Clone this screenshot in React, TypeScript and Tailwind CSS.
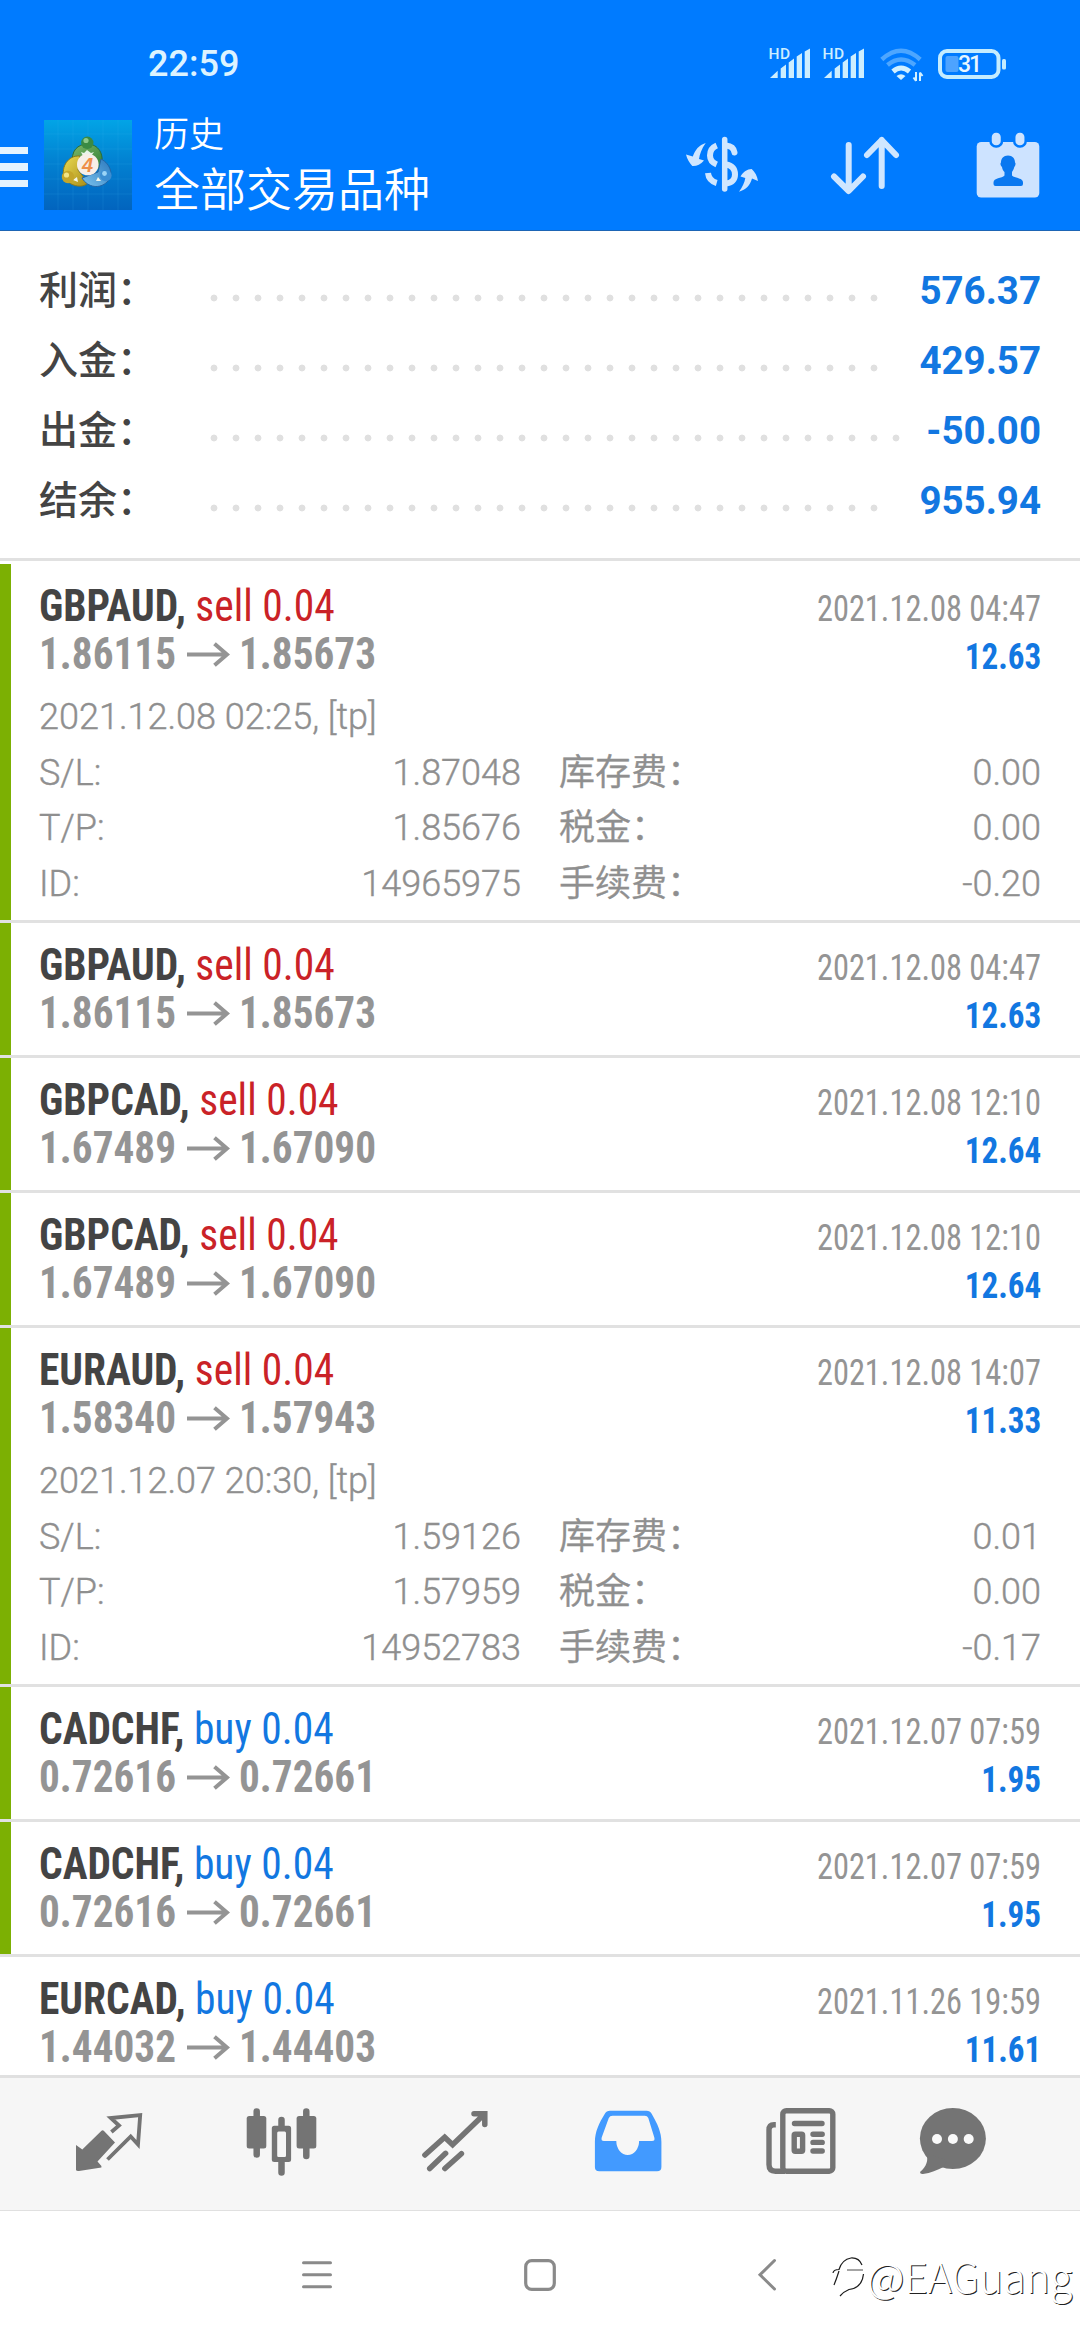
import type { ReactNode } from "react";

type Trade = {
	id: string;
	symbol: string;
	side: "sell" | "buy";
	volume: string;
	open: string;
	close: string;
	closedAt: string;
	profit: string;
	won?: boolean;
	details?: {
		openedAt: string;
		sl: string;
		tp: string;
		ticket: string;
		swap: string;
		tax: string;
		fee: string;
	};
};

const summary = [
	{ label: "利润：", value: "576.37", dots: "w-[682px]" },
	{ label: "入金：", value: "429.57", dots: "w-[682px]" },
	{ label: "出金：", value: "-50.00", dots: "w-[704px]" },
	{ label: "结余：", value: "955.94", dots: "w-[682px]" },
];

const trades: Trade[] = [
	{
		id: "1",
		symbol: "GBPAUD",
		side: "sell",
		volume: "0.04",
		open: "1.86115",
		close: "1.85673",
		closedAt: "2021.12.08 04:47",
		profit: "12.63",
		won: true,
		details: {
			openedAt: "2021.12.08 02:25, [tp]",
			sl: "1.87048",
			tp: "1.85676",
			ticket: "14965975",
			swap: "0.00",
			tax: "0.00",
			fee: "-0.20",
		},
	},
	{
		id: "2",
		symbol: "GBPAUD",
		side: "sell",
		volume: "0.04",
		open: "1.86115",
		close: "1.85673",
		closedAt: "2021.12.08 04:47",
		profit: "12.63",
		won: true,
	},
	{
		id: "3",
		symbol: "GBPCAD",
		side: "sell",
		volume: "0.04",
		open: "1.67489",
		close: "1.67090",
		closedAt: "2021.12.08 12:10",
		profit: "12.64",
		won: true,
	},
	{
		id: "4",
		symbol: "GBPCAD",
		side: "sell",
		volume: "0.04",
		open: "1.67489",
		close: "1.67090",
		closedAt: "2021.12.08 12:10",
		profit: "12.64",
		won: true,
	},
	{
		id: "5",
		symbol: "EURAUD",
		side: "sell",
		volume: "0.04",
		open: "1.58340",
		close: "1.57943",
		closedAt: "2021.12.08 14:07",
		profit: "11.33",
		won: true,
		details: {
			openedAt: "2021.12.07 20:30, [tp]",
			sl: "1.59126",
			tp: "1.57959",
			ticket: "14952783",
			swap: "0.01",
			tax: "0.00",
			fee: "-0.17",
		},
	},
	{
		id: "6",
		symbol: "CADCHF",
		side: "buy",
		volume: "0.04",
		open: "0.72616",
		close: "0.72661",
		closedAt: "2021.12.07 07:59",
		profit: "1.95",
		won: true,
	},
	{
		id: "7",
		symbol: "CADCHF",
		side: "buy",
		volume: "0.04",
		open: "0.72616",
		close: "0.72661",
		closedAt: "2021.12.07 07:59",
		profit: "1.95",
		won: true,
	},
	{
		id: "8",
		symbol: "EURCAD",
		side: "buy",
		volume: "0.04",
		open: "1.44032",
		close: "1.44403",
		closedAt: "2021.11.26 19:59",
		profit: "11.61",
	},
];

function SignalIcon() {
	return (
		<svg width="44" height="36" viewBox="0 0 44 36" fill="#cdeeff">
			<text x="0.5" y="13" fontSize="15.5" fontWeight="500" textLength="21.5">
				HD
			</text>
			<path d="M2 32 L9.7 24.7 V32Z M12.7 32 V22.5 L18 18.5 V32Z M20.7 32 V16.5 L26 12.5 V32Z M28.7 32 V10.5 L34 7 V32Z M36.7 32 V5.5 L42 2.5 V32Z" />
		</svg>
	);
}

function WifiIcon() {
	return (
		<svg width="45" height="36" viewBox="0 0 45 36" fill="none">
			<path d="M2.8 13.5 Q22 -4 41.2 13.5" stroke="#4da6ff" strokeWidth="4.5" />
			<path d="M8.5 19 Q22 8 36 19" stroke="#4da6ff" strokeWidth="4.5" />
			<path d="M14 25.5 Q22 18.5 30.5 25.5" stroke="#d2f0ff" strokeWidth="5" />
			<path d="M17.5 30 Q22 26.5 26.5 30 L22 34Z" fill="#d2f0ff" />
			<path
				d="M37 26 V35 M34.5 31.5 L37 35 M41 35 V26.5 M41 26.5 L43.5 30"
				stroke="#d2f0ff"
				strokeWidth="2"
			/>
		</svg>
	);
}

function BatteryIcon() {
	return (
		<svg width="69" height="36" viewBox="0 0 69 36">
			<rect
				x="2"
				y="5"
				width="58.5"
				height="26"
				rx="7"
				fill="none"
				stroke="#c4ecff"
				strokeWidth="4"
			/>
			<rect x="7.5" y="10" width="13" height="16" rx="2" fill="#4da3ff" />
			<rect x="64" y="13" width="4" height="10.5" rx="1.5" fill="#c4ecff" />
			<text
				x="20"
				y="26"
				fontSize="23"
				fontWeight="500"
				textLength="24"
				fill="#e8f7ff"
			>
				31
			</text>
		</svg>
	);
}

function AppLogo() {
	return (
		<svg width="88" height="90" viewBox="0 0 88 90">
			<defs>
				<linearGradient id="logoBg" x1="0" y1="0" x2="0" y2="1">
					<stop offset="0" stopColor="#02a4e6" />
					<stop offset="0.45" stopColor="#0282d2" />
					<stop offset="1" stopColor="#0264be" />
				</linearGradient>
				<linearGradient id="logoGreen" x1="0" y1="0" x2="1" y2="1">
					<stop offset="0" stopColor="#7fb86a" />
					<stop offset="1" stopColor="#2c7d33" />
				</linearGradient>
				<linearGradient id="logoYellow" x1="0" y1="0" x2="1" y2="1">
					<stop offset="0" stopColor="#ecdc52" />
					<stop offset="1" stopColor="#a88c18" />
				</linearGradient>
				<linearGradient id="logoBlue" x1="1" y1="0" x2="0" y2="1">
					<stop offset="0" stopColor="#2b78bd" />
					<stop offset="1" stopColor="#7cc4ee" />
				</linearGradient>
			</defs>
			<rect width="88" height="90" fill="url(#logoBg)" />
			<path
				d="M14 0V90M29 0V90M44 0V90M59 0V90M74 0V90M0 14H88M0 29H88M0 44H88M0 59H88M0 74H88"
				stroke="#4fb8f0"
				strokeOpacity="0.14"
			/>
			<path
				d="M29 44 C26 31 34 24 43.5 24 C54 24 61 34 57 47 L49 50 L42 34Z"
				fill="url(#logoGreen)"
				stroke="#2b6b35"
				strokeWidth="1"
			/>
			<path
				d="M36 36 C24 35 17 47 20 57 C25 66 38 69 44 63 L34 50Z"
				fill="url(#logoYellow)"
				stroke="#8c7a18"
				strokeWidth="1"
			/>
			<path
				d="M57 39 C67 44 70 56 63 62 C56 69 44 68 38 58 L54 52Z"
				fill="url(#logoBlue)"
				stroke="#2465a4"
				strokeWidth="1"
			/>
			<path d="M37 32 L40 33 L43 30 L47 33 L50 32 L47 36 H39Z" fill="#e8f4ea" />
			<path d="M29 60 L33 57 L34 62Z M54 57 L57 61 L52 61Z" fill="#f2f6ea" />
			<circle cx="43.3" cy="22.8" r="6.2" fill="#3a8a44" />
			<circle cx="42" cy="20.5" r="2.6" fill="#8cc98d" />
			<circle cx="24" cy="57" r="6.2" fill="#c4a62a" />
			<circle cx="22.5" cy="55" r="2.6" fill="#f2e486" />
			<circle cx="61.8" cy="55.5" r="5.8" fill="#3b8ed2" />
			<circle cx="60.5" cy="53.5" r="2.4" fill="#9bd4f6" />
			<circle cx="43.8" cy="44.5" r="10.8" fill="#f7efe8" />
			<text
				x="38"
				y="51.5"
				fontSize="20"
				fontWeight="700"
				fontStyle="italic"
				fontFamily="Liberation Sans, sans-serif"
				fill="#ee8f4a"
			>
				4
			</text>
		</svg>
	);
}

function CurrencyIcon() {
	return (
		<svg width="76" height="60" viewBox="0 0 76 60" fill="none">
			<path
				d="M19.7 8 C15.5 14 13.8 19 13 24 L18 25.5 C14.5 29.5 10.5 31.3 6.3 31 C3.5 28 1 24 0 19.5 L6.8 21.5 C9 15 13 10 19.7 8Z"
				fill="#cfe6ff"
			/>
			<path
				d="M53 56.7 C56.5 52 58.5 47.5 59.3 43 L54.5 41.5 C57.5 36.5 61 34.3 65.7 34 C69 37 71.3 41 72 46 L66 43.5 C64 50.5 60 54.5 53 56.7Z"
				fill="#cfe6ff"
			/>
			<g stroke="#cfe6ff" strokeWidth="6">
				<path d="M38.7 4.5 V54" strokeLinecap="round" strokeWidth="5.5" />
				<path d="M30.7 10.5 C26 12.5 24 16.5 24 20.5 C24 25 26 27.5 30.7 29.5" />
				<path d="M22 38 C22.5 43 25.5 46.5 30.7 48" />
				<path d="M40 10.5 C45.5 11 48 14 48.5 17.5" strokeLinecap="round" />
				<path d="M40 29.5 C46.5 30.5 49 34.5 49 39.5 C49 44.5 46 48 40 48.5" />
			</g>
		</svg>
	);
}

function SortIcon() {
	return (
		<svg
			width="72"
			height="60"
			viewBox="0 0 72 60"
			fill="none"
			stroke="#cfe6ff"
			strokeWidth="6"
			strokeLinecap="round"
			strokeLinejoin="round"
		>
			<path d="M19.7 10 V55.5 M5 41.5 L19.7 56 L34 41.5" />
			<path d="M52.7 51 V5 M38 20 L52.7 5 L67 20" />
		</svg>
	);
}

function CalendarIcon() {
	return (
		<svg width="66" height="68" viewBox="0 0 66 68">
			<rect x="1.7" y="11" width="62.6" height="55.5" rx="4.5" fill="#cde3ff" />
			<g fill="#cde3ff" stroke="#007bff" strokeWidth="2.5">
				<rect x="15.5" y="0.5" width="11.5" height="15" rx="5.5" />
				<rect x="39.2" y="0.5" width="11.5" height="15" rx="5.5" />
			</g>
			<path
				d="M33 24.5 C37.5 24.5 40 27.5 40 31.5 C41 32 40.5 35 39.3 36 C38.5 39 37.5 40 37 41 V44.5 C40 47.5 48 46.5 48 51.5 V53 Q48 55 46 55 H20.5 Q18.5 55 18.5 53 V51.5 C18.5 46.5 27 47.5 29.5 44.5 V41 C28.5 40 27.5 39 27 36 C25.5 35 25 32 26 31.5 C26 27.5 28.5 24.5 33 24.5Z"
				fill="#0a78f0"
			/>
		</svg>
	);
}

function ArrowIcon() {
	return (
		<svg
			width="43"
			height="25"
			viewBox="0 0 43 25"
			fill="none"
			stroke="#949494"
			strokeWidth="4"
			className="mr-[9px] ml-[10px]"
		>
			<path d="M0 12.5 H40 M27.5 1.8 L40 12.5 L27.5 23.2" />
		</svg>
	);
}

function StatusBar() {
	return (
		<div className="flex h-[99px] items-start pl-[148px] pr-[73px]">
			<span className="mt-[46px] text-[36px] leading-[36px] font-medium text-[#dcf3ff]">
				22:59
			</span>
			<div className="mt-[46px] ml-auto flex items-start">
				<div className="flex items-start gap-[10px]">
					<SignalIcon />
					<SignalIcon />
				</div>
				<div className="ml-[13px]">
					<WifiIcon />
				</div>
				<div className="ml-[14px]">
					<BatteryIcon />
				</div>
			</div>
		</div>
	);
}

function AppBar() {
	return (
		<div className="flex h-[131px] items-center pr-[39px]">
			<div className="flex w-[28px] flex-col gap-[9px] pt-[5px]">
				<div className="h-[7.5px] bg-[#e4f3ff]" />
				<div className="h-[7.5px] bg-[#e4f3ff]" />
				<div className="h-[7.5px] bg-[#e4f3ff]" />
			</div>
			<div className="ml-[16px]">
				<AppLogo />
			</div>
			<div className="ml-[22px] flex flex-col self-start pt-[12px] text-white">
				<span className="text-[35px] leading-[50px] font-[350]">历史</span>
				<span className="mt-[-2px] text-[46px] leading-[62px] font-[350]">
					全部交易品种
				</span>
			</div>
			<div className="ml-auto flex items-center">
				<CurrencyIcon />
				<div className="ml-[67px]">
					<SortIcon />
				</div>
				<div className="ml-[74px]">
					<CalendarIcon />
				</div>
			</div>
		</div>
	);
}

function Summary() {
	return (
		<div className="flex h-[330px] flex-col border-b-[3px] border-[#e1e1e1] px-[39px] pt-[25px]">
			{summary.map((row) => (
				<div
					key={row.label}
					className="flex h-[70px] items-center text-[39px] leading-[70px]"
				>
					<span className="w-[164px] shrink-0 font-medium text-[#444444]">
						{row.label}
					</span>
					<div
						className={`mt-[14px] h-[22px] shrink-0 bg-[radial-gradient(circle,#e0e0e0_3px,transparent_3.8px)] bg-[length:22px_22px] ${row.dots}`}
					/>
					<span className="ml-auto text-[38.5px] font-bold text-[#1277e1]">
						{row.value}
					</span>
				</div>
			))}
		</div>
	);
}

// prices are tabular, so a fixed box keeps the arrow column aligned
function Price({ value }: { value: string }) {
	return (
		<span className="w-[137.5px]">
			<span className="inline-block origin-left scale-x-[0.937]">{value}</span>
		</span>
	);
}

function DetailCell({ label, value }: { label: string; value: string }) {
	return (
		<div className="flex justify-between">
			<span>{label}</span>
			<span>{value}</span>
		</div>
	);
}

function TradeRow({ trade }: { trade: Trade }) {
	const { details } = trade;
	return (
		<div className="flex shrink-0 border-b-[3px] border-[#e1e1e1]">
			<div
				className={`w-[11px] shrink-0 ${trade.won ? "bg-[#7cb003]" : "bg-white"}`}
			/>
			<div
				className={`flex flex-1 flex-col pt-[18px] pr-[39px] pl-[28px] ${details ? "h-[356px]" : "h-[132px]"}`}
			>
				<div className="flex h-[48px] items-baseline justify-between font-['Roboto_Condensed',Roboto,sans-serif] leading-[48px]">
					<span className="inline-block origin-left scale-x-[0.943] text-[44px]">
						<span className="font-bold text-[#444444]">{trade.symbol},</span>{" "}
						<span
							className={
								trade.side === "sell" ? "text-[#ca2227]" : "text-[#1277e1]"
							}
						>
							{trade.side} {trade.volume}
						</span>
					</span>
					<span className="inline-block origin-right scale-x-[0.9] text-[36px] text-[#949494]">
						{trade.closedAt}
					</span>
				</div>
				<div className="flex h-[48px] items-baseline justify-between font-['Roboto_Condensed',Roboto,sans-serif] leading-[48px] font-bold">
					<span className="flex items-center text-[44px] text-[#949494]">
						<Price value={trade.open} />
						<ArrowIcon />
						<Price value={trade.close} />
					</span>
					<span className="inline-block origin-right scale-x-[0.92] text-[36px] text-[#1277e1]">
						{trade.profit}
					</span>
				</div>
				{details && (
					<div className="mt-[13px] text-[36px] leading-[55.6px] font-[350] text-[#8f8f8f] [-webkit-text-stroke:0.4px]">
						<div className="h-[54.5px] leading-[52px]">{details.openedAt}</div>
						<div className="grid grid-cols-2 gap-x-[38px]">
							<DetailCell label="S/L:" value={details.sl} />
							<DetailCell label="库存费：" value={details.swap} />
							<DetailCell label="T/P:" value={details.tp} />
							<DetailCell label="税金：" value={details.tax} />
							<DetailCell label="ID:" value={details.ticket} />
							<DetailCell label="手续费：" value={details.fee} />
						</div>
					</div>
				)}
			</div>
		</div>
	);
}

function NavIcon({ children }: { children: ReactNode }) {
	return (
		<div className="flex w-[173px] shrink-0 justify-center last:w-[131px]">
			<svg width="72" height="72" viewBox="0 0 72 72" fill="none">
				{children}
			</svg>
		</div>
	);
}

function BottomNav() {
	return (
		<div className="flex h-[136px] shrink-0 border-t-[3px] border-b border-[#e0e0e0] bg-[#f6f6f6] pt-[27px] pl-[22px]">
			<NavIcon>
				<path
					d="M3 40 L9.3 44.5 L28.5 25.8 Q29.8 24.6 31 26 L42 37.5 L24.5 56.5 L28.4 61 V62.5 L6 66 Q3.5 66.3 3 65Z"
					fill="#747474"
				/>
				<path
					d="M38.4 27 L46 20.5 L37.8 13 L67.2 10 L65 39.5 L57.7 31.5 L34.5 54.5"
					stroke="#747474"
					strokeWidth="3.8"
				/>
			</NavIcon>
			<NavIcon>
				<g stroke="#747474" strokeWidth="6.5" strokeLinecap="round">
					<path d="M10.7 6.5 V49.5 M60.3 6.5 V51 M35.5 15 V22 M35.5 57 V67.5" />
				</g>
				<rect x="0.7" y="11" width="19.6" height="32.5" rx="2.5" fill="#747474" />
				<rect x="50.6" y="11" width="19.7" height="32.5" rx="2.5" fill="#747474" />
				<path
					d="M28.3 20.7 H42.6 Q45.1 20.7 45.1 23.2 V54.5 Q45.1 57 42.6 57 H28.3 Q25.8 57 25.8 54.5 V23.2 Q25.8 20.7 28.3 20.7Z M32.5 26.5 Q31.2 26.5 31.2 28 V50.5 Q31.2 52 32.5 52 H38.7 Q40 52 40 50.5 V28 Q40 26.5 38.7 26.5Z"
					fill="#747474"
					fillRule="evenodd"
				/>
			</NavIcon>
			<NavIcon>
				<g stroke="#747474" strokeWidth="5.5" strokeLinecap="round">
					<path d="M5.9 50 L25.7 32.3 L33.6 39.8 L65.5 9 M55 8.7 H65.8 V19.5" />
					<path d="M10.7 63.5 L26.6 48.3 M25.9 63.5 L42.4 48.7" />
				</g>
			</NavIcon>
			<NavIcon>
				<path
					d="M18 5.7 H54.5 Q58 5.7 59.8 9 C65.5 19 69.4 27 69.4 37 V62 Q69.4 66.3 65 66.3 H7.3 Q2.9 66.3 2.9 62 V37 C2.9 27 7 18 12.7 9 Q14.5 5.7 18 5.7Z M20.5 10.7 Q17.8 10.7 16.8 13 L9.7 32.5 Q8.8 36 12 36 H24.3 A11.4 14 0 0 0 47.1 36 H60 Q63.3 36 62.3 32.5 L56.3 13 Q55.3 10.7 52.8 10.7Z"
					fill="#429aff"
					fillRule="evenodd"
				/>
			</NavIcon>
			<NavIcon>
				<g stroke="#747474" strokeWidth="5.4">
					<rect x="17.8" y="5.7" width="50" height="60.5" rx="3.5" />
					<path d="M10.8 19.7 H9 Q4 19.7 4 25 V59.5 Q4 66.2 10.5 66.2 H20" />
					<rect x="29.2" y="29.3" width="8.4" height="17" rx="1" />
					<path
						d="M29.5 18.5 H57 M48 29.2 H57.2 M48 37.4 H57.2 M48 46 H57.2"
						strokeLinecap="round"
					/>
				</g>
			</NavIcon>
			<NavIcon>
				<ellipse cx="35.9" cy="33.5" rx="33" ry="30.5" fill="#747474" />
				<path
					d="M9 48 C12 55 9.5 61.5 3 67 Q3 69.3 6 69 C14 68 20 65 26.6 62 L30 55Z"
					fill="#747474"
				/>
				<g fill="#fafafa">
					<circle cx="20" cy="34" r="5" />
					<circle cx="35.9" cy="34" r="5" />
					<circle cx="51.7" cy="34" r="5" />
				</g>
			</NavIcon>
		</div>
	);
}

function SystemBar() {
	return (
		<div className="relative flex h-[129px] shrink-0 items-start pt-[46px]">
			<svg
				width="36"
				height="36"
				viewBox="0 0 36 36"
				stroke="#8a8a8a"
				strokeWidth="3"
				strokeLinecap="round"
				className="ml-[299px]"
			>
				<path d="M4.5 5.8 H31.5 M4.5 17.8 H31.5 M4.5 29.8 H31.5" />
			</svg>
			<svg
				width="36"
				height="36"
				viewBox="0 0 36 36"
				fill="none"
				stroke="#8a8a8a"
				strokeWidth="3.2"
				className="ml-[187px]"
			>
				<rect x="3.7" y="3.7" width="28.6" height="28.6" rx="6" />
			</svg>
			<svg
				width="36"
				height="36"
				viewBox="0 0 36 36"
				fill="none"
				stroke="#8a8a8a"
				strokeWidth="3"
				strokeLinecap="round"
				className="ml-[191px]"
			>
				<path d="M25.5 3.5 L11 17.8 L25.5 32" />
			</svg>
			{/* watermark */}
			<div className="absolute top-[38px] left-[829px] flex items-center">
				<svg
					width="36"
					height="48"
					viewBox="0 0 36 48"
					fill="none"
					stroke="#1c1c1c"
					strokeWidth="1.2"
				>
					<path d="M4 22 Q4.5 18.5 10 18.5 Q13 8.5 22 7 Q30 6.5 33 14" />
					<path d="M10 20 Q7.5 28 5 34" />
					<path d="M18 19 H34" strokeWidth="0.8" />
					<path d="M34.5 23 Q33 37 20 38.5 Q15 40.5 11 45" />
				</svg>
				<span className="ml-[2px] font-['Noto_Sans_CJK_SC',sans-serif] text-[41px] leading-[52px] font-light text-white [text-shadow:1px_1px_0_#222]">
					@EAGuang
				</span>
			</div>
		</div>
	);
}

export default function App() {
	return (
		<div className="flex h-[2340px] w-[1080px] flex-col overflow-hidden bg-white font-['Roboto','Noto_Sans_CJK_SC',sans-serif]">
			<header className="h-[231px] shrink-0 border-b-[1.5px] border-[#1d65b5] bg-[#007bff]">
				<StatusBar />
				<AppBar />
			</header>
			<Summary />
			<main className="flex h-[1514px] shrink-0 flex-col overflow-hidden pt-[3px]">
				{trades.map((trade) => (
					<TradeRow key={trade.id} trade={trade} />
				))}
			</main>
			<BottomNav />
			<SystemBar />
		</div>
	);
}
